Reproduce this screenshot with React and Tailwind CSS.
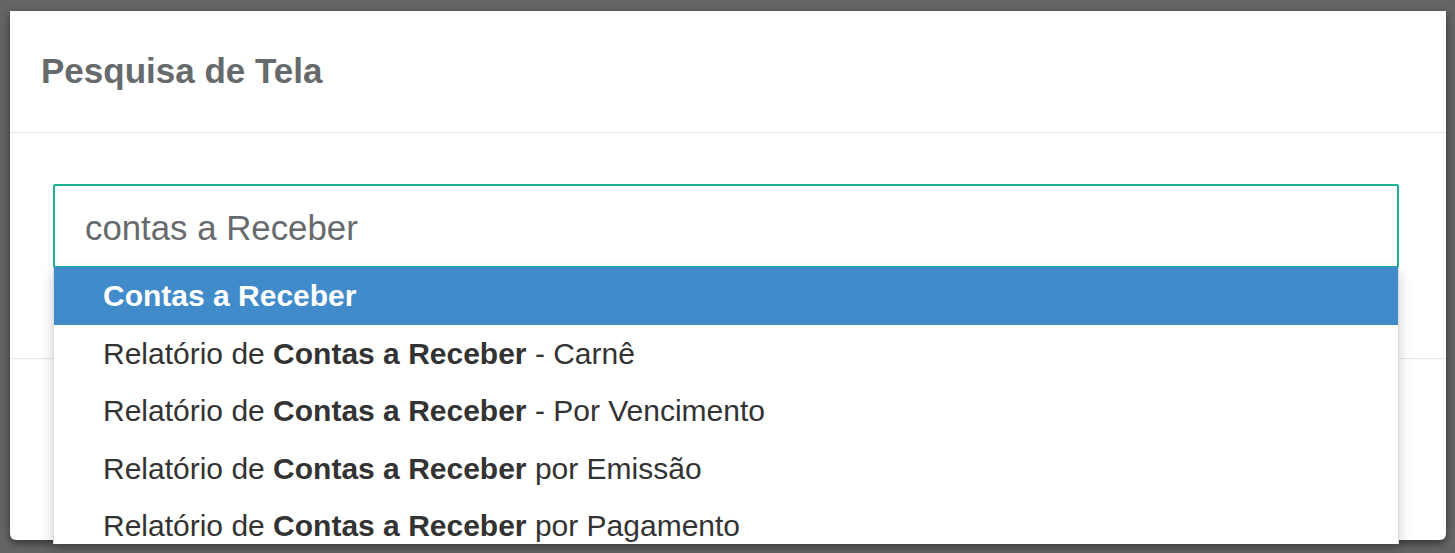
import React from 'react';

const results = [
    { before: '', match: 'Contas a Receber', after: '', active: true },
    { before: 'Relatório de ', match: 'Contas a Receber', after: ' - Carnê' },
    { before: 'Relatório de ', match: 'Contas a Receber', after: ' - Por Vencimento' },
    { before: 'Relatório de ', match: 'Contas a Receber', after: ' por Emissão' },
    { before: 'Relatório de ', match: 'Contas a Receber', after: ' por Pagamento' },
];

const App = () => {
    return (
        <div className="relative w-[1455px] h-[553px] overflow-hidden bg-[#656565] pt-[11px] pl-[10px] pr-[9px] font-[family-name:Liberation_Sans,Arial,sans-serif]">
            <div className="h-[529px] bg-white rounded-b-[6px] shadow-[0_3px_9px_rgba(0,0,0,0.5)] flex flex-col">
                <div className="h-[122px] border-b border-[#e5e5e5] px-[31px] pt-[40px]">
                    <h4 className="text-[35px] leading-[40px] font-bold text-[#676a6c]">Pesquisa de Tela</h4>
                </div>
                <div className="h-[226px] border-b border-[#e5e5e5] pl-[43px] pr-[47px] pt-[51px]">
                    <div className="h-[84px] border-2 border-[#1ab394] rounded-[2px] flex items-center pl-[30px] pt-[5px] text-[34.8px] text-[#676a6c]">
                        contas a Receber
                    </div>
                </div>
                <div className="flex-1" />
            </div>

            <ul className="absolute left-[53px] top-[267px] w-[1346px] h-[277px] overflow-hidden bg-white border-x border-[rgba(0,0,0,0.14)] shadow-[0_6px_12px_rgba(0,0,0,0.2)] text-[30px] text-[#333]">
                {results.map((r, i) => (
                    <li
                        key={i}
                        className={`h-[57.5px] leading-[57.5px] pl-[49px] whitespace-nowrap ${r.active ? 'bg-[#428bca] text-white' : ''}`}
                    >
                        {r.before}
                        <strong className="font-bold">{r.match}</strong>
                        {r.after}
                    </li>
                ))}
            </ul>
        </div>
    );
};

export default App;
